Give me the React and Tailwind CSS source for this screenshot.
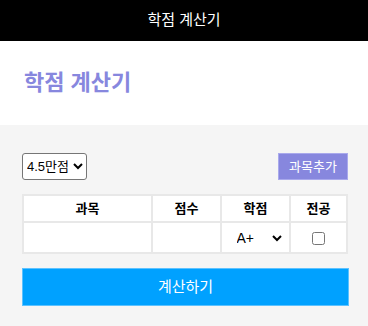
import React, { useState } from 'react';

const App = () => {
  const [scale, setScale] = useState('4.5');
  const [rows] = useState([{ name: '', score: '', grade: 'A+', major: false }]);

  return (
    <div className="flex flex-col h-[326px] w-[368px] font-['Liberation_Sans','Noto_Sans_CJK_KR',sans-serif]">
      {/* 상단 바 */}
      <div className="h-[41px] bg-black text-white text-[15px] flex items-center justify-center">
        학점 계산기
      </div>

      {/* 제목 */}
      <div className="h-[84px] bg-white flex items-center pl-[24px] pb-[2px]">
        <h1 className="text-[22px] font-bold text-[#8787de]">학점 계산기</h1>
      </div>

      {/* 계산 영역 */}
      <div className="flex-1 bg-[#f5f5f5] pt-[28px] pl-[22px] pr-[20px]">
        <div className="flex items-center justify-between">
          <select
            value={scale}
            onChange={(e) => setScale(e.target.value)}
            className="h-[27px] w-[65px] bg-white border border-[#767676] rounded-[3px] text-[13px] text-black pl-0"
          >
            <option value="4.5">4.5만점</option>
            <option value="4.3">4.3만점</option>
          </select>
          <button className="h-[27px] w-[70px] bg-[#8787de] border border-[#a9a9ec] text-white text-[13px]">
            과목추가
          </button>
        </div>

        <table className="mt-[14px] w-[326px] border-collapse bg-white text-[13px] text-black">
          <thead>
            <tr className="h-[27px]">
              <th className="w-[129px] border-2 border-[#e8e8e8] font-semibold">과목</th>
              <th className="w-[69px] border-2 border-[#e8e8e8] font-semibold">점수</th>
              <th className="w-[69px] border-2 border-[#e8e8e8] font-semibold">학점</th>
              <th className="border-2 border-[#e8e8e8] font-semibold">전공</th>
            </tr>
          </thead>
          <tbody>
            {rows.map((row, i) => (
              <tr key={i} className="h-[31px]">
                <td className="border-2 border-[#e8e8e8] p-0">
                  <input className="w-full h-[27px] border-0 bg-transparent outline-none" defaultValue={row.name} />
                </td>
                <td className="border-2 border-[#e8e8e8] p-0">
                  <input className="w-full h-[27px] border-0 bg-transparent outline-none" defaultValue={row.score} />
                </td>
                <td className="border-2 border-[#e8e8e8] p-0 text-center">
                  <select defaultValue={row.grade} className="w-[52px] h-[24px] border-0 bg-transparent text-[14px] ml-[6px]">
                    {['A+', 'A0', 'B+', 'B0', 'C+', 'C0', 'D+', 'D0', 'F'].map((g) => (
                      <option key={g} value={g}>{g}</option>
                    ))}
                  </select>
                </td>
                <td className="border-2 border-[#e8e8e8] p-0 text-center">
                  <input type="checkbox" defaultChecked={row.major} className="w-[13px] h-[13px] align-middle" />
                </td>
              </tr>
            ))}
          </tbody>
        </table>

        <button className="mt-[14px] w-[327px] h-[38px] bg-[#00a1ff] border border-[#5cc2ff] text-white text-[15px]">
          계산하기
        </button>
      </div>
    </div>
  );
};

export default App;
